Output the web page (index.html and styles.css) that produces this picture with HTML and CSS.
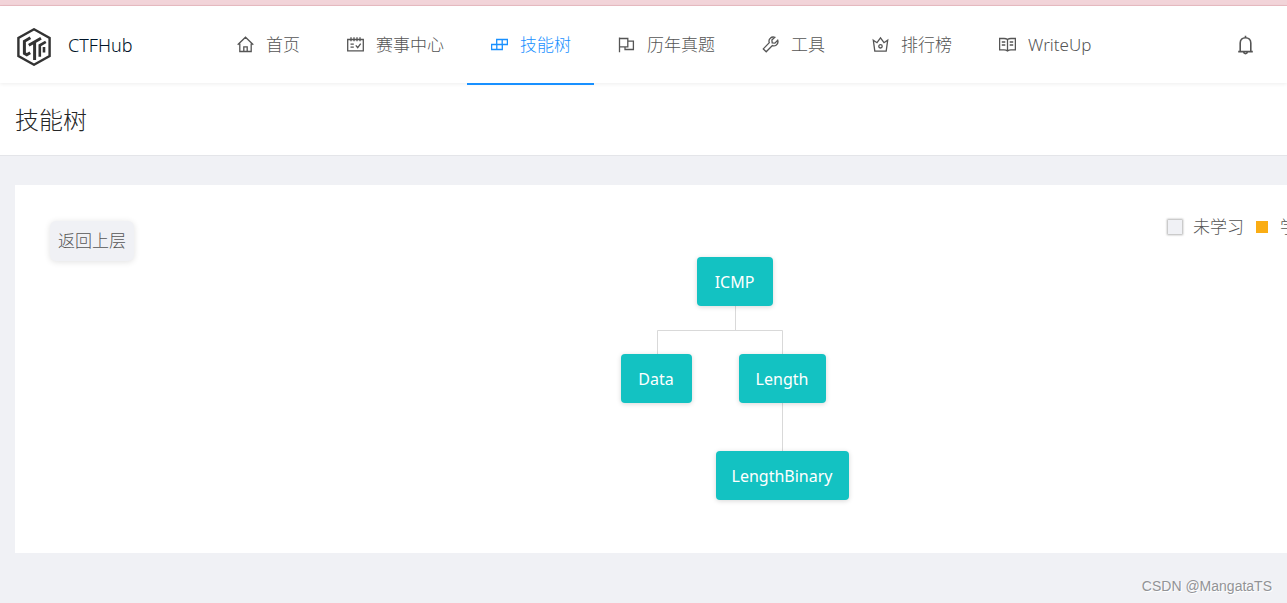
FILE: index.html
```html
<!DOCTYPE html>
<html lang="zh-CN">
<head>
<meta charset="utf-8">
<title>CTFHub 技能树</title>
<link rel="stylesheet" href="styles.css">
</head>
<body>
<div class="strip"></div>
<header class="header">
  <a class="brand" href="#">
    <svg class="logo" viewBox="0 0 34 38" fill="none" stroke="#333">
      <path d="M17 1.3 32.6 10v18L17 36.7 1.4 28V10z" stroke-width="2.4"/>
      <path d="M13.4 9.8 7.4 13.3v12l2.4 1.4 3.4-2" stroke-width="3"/>
      <path d="M11.8 17.2 24 10.2M17.6 14v18" stroke-width="3"/>
      <path d="M28.8 13.8 22.8 17.3v11.5M27 19v5.5" stroke-width="2.6"/>
    </svg>
    <span>CTFHub</span>
  </a>
  <nav class="nav">
    <a class="item" href="#"><svg class="icon" viewBox="0 0 17 17"><path d="M.7 8.8 8.5 1.2l7.8 7.6M2.8 7.5v8h11.4v-8M6.8 15.5v-4.6h3.4v4.6"/></svg>首页</a>
    <a class="item" href="#"><svg class="icon" viewBox="0 0 17 17"><path d="M.7 3.5h15.6v11.3H.7zM4 1.3v4M7 1.3v4M10 1.3v4M13 1.3v4M3.5 8.2h3.3M3.5 11.2h3.3M8.8 9.3l1.9 2.3 3-4"/></svg>赛事中心</a>
    <a class="item active" href="#"><svg class="icon" viewBox="0 0 17 17"><path d="M5.7 3.5h10.7v5H5.7zM.6 8.5h10.7v5H.6zM11.2 3.5v5M5.8 8.5v5"/></svg>技能树</a>
    <a class="item" href="#"><svg class="icon" viewBox="0 0 17 17"><path d="M1.5 1.5v14.7M1.5 2.5h8.3v8.3H1.5M9.8 5.2h5.6v8.3H7v-2.7"/></svg>历年真题</a>
    <a class="item" href="#"><svg class="icon" viewBox="0 0 17 17"><path d="M12.8 1.3 9.9 4.1l.3 2.7 2.7.3 2.8-2.9c.7 2.2-.1 4-1.6 5-1.2.8-2.6.8-3.7.4L4.2 15.8 1.3 12.9 7.3 6.7C6.7 5 7 3.3 8.3 2.2c1.3-1.2 3.1-1.4 4.5-.9z"/></svg>工具</a>
    <a class="item" href="#"><svg class="icon" viewBox="0 0 17 17"><path d="M1.3 4.2 5 6.7l3.5-4.9L12 6.7l3.7-2.5-1.5 10.9H2.8z"/><circle cx="8.5" cy="10.3" r="1.7"/></svg>排行榜</a>
    <a class="item" href="#"><svg class="icon" viewBox="0 0 17 17"><path d="M8.5 3.6C7.5 2.8 6.5 2.5 5 2.5H.6v11.3H5c1.5 0 2.5.3 3.5 1.1 1-.8 2-1.1 3.5-1.1h4.4V2.5H12c-1.5 0-2.5.3-3.5 1.1v11.3M2.8 6h3.5M2.8 9h3.5M10.7 6h3.5M10.7 9h3.5"/></svg>WriteUp</a>
  </nav>
  <button class="bell" type="button" aria-label="通知"><svg class="bell-icon" viewBox="0 0 17 20"><path d="M8.5.7v2M3.2 16.3V8c0-3.2 2.2-5.3 5.3-5.3s5.3 2.1 5.3 5.3v8.3M1.2 16.6h14.6M6.6 17.2c.4 2 3.4 2 3.8 0"/></svg></button>
</header>
<section class="heading"><h1>技能树</h1></section>
<main class="content">
  <section class="panel">
    <div class="toolbar">
      <button class="back" type="button">返回上层</button>
      <div class="legend">
        <span class="swatch todo"></span><span>未学习</span>
        <span class="swatch doing"></span><span>学</span>
      </div>
    </div>
    <div class="tree">
      <svg class="links" viewBox="0 0 228 243"><path d="M114.5 49v24M36.5 97V73.5h125V97M161.5 146v48"/></svg>
      <a class="node icmp" href="#">ICMP</a>
      <a class="node data" href="#">Data</a>
      <a class="node length" href="#">Length</a>
      <a class="node binary" href="#">LengthBinary</a>
    </div>
  </section>
</main>
<div class="watermark">CSDN @MangataTS</div>
</body>
</html>
```
FILE: styles.css
```css
* { box-sizing: border-box; }
body {
  margin: 0;
  min-height: 100vh;
  position: relative;
  overflow-x: hidden;
  background: #f0f1f5;
  color: #555;
  font-family: "Noto Sans", "Noto Sans CJK SC", sans-serif;
  font-size: 17px;
  font-weight: 300;
  line-height: 26px;
}
a { color: inherit; text-decoration: none; }
button { font: inherit; color: inherit; border: 0; padding: 0; background: none; cursor: pointer; }
.strip { height: 6px; background: #f2d4d9; border-bottom: 1px solid #e9bcc3; }
.header {
  position: relative;
  display: flex;
  height: 77px;
  padding: 0 32px 0 16px;
  background: #fff;
  box-shadow: 0 1px 4px rgba(0, 0, 0, .07);
}
.brand { display: flex; align-items: center; gap: 16px; width: 197px; color: #001529; font-size: 18px; }
.logo { width: 36px; height: 38px; margin-top: 4px; }
.nav { display: flex; flex: 1; }
.item { display: flex; align-items: center; gap: 12px; padding: 0 23px 0 24px; white-space: nowrap; height: 79px; border-bottom: 2px solid transparent; }
.active { color: #1890ff; border-color: #1890ff; }
.icon { width: 17px; height: 17px; }
.icon, .bell-icon { fill: none; stroke: currentColor; stroke-width: 1.3; }
.bell { width: 20px; }
.bell-icon { display: block; width: 17px; height: 20px; margin: 0 auto; stroke-width: 1.6; }
.heading { padding: 19px 15px 17px; background: #fff; border-bottom: 1px solid #e4e5e9; }
h1 { margin: 0; font-size: 24px; line-height: 36px; font-weight: 300; color: #262626; }
.content { padding: 29px 0 50px 15px; }
.panel { background: #fff; padding: 30px 0 53px 35px; overflow: hidden; }
.toolbar { display: flex; align-items: flex-start; height: 42px; }
.back { margin-top: 6px; height: 40px; padding: 0 8px; border-radius: 6px; background: #f0f1f5; box-shadow: 0 1px 6px rgba(0, 0, 0, .12); }
.legend { display: flex; align-items: center; width: 119px; margin-left: auto; line-height: 24px; white-space: nowrap; }
.swatch { flex: none; width: 12px; height: 12px; margin: 0 12px; background: #faad14; }
.todo { width: 14px; height: 14px; margin: 0 11px 0 0; background: #f0f1f5; box-shadow: 0 0 2px 1px rgba(0, 0, 0, .3); }
.tree { position: relative; width: 228px; height: 243px; margin: 0 auto; left: 66px; }
.links { display: block; width: 228px; height: 243px; fill: none; stroke: #d9d9d9; }
.node {
  position: absolute;
  display: flex;
  align-items: center;
  justify-content: center;
  height: 49px;
  border-radius: 4px;
  background: #13c2c2;
  color: #fff;
  font-size: 16px;
  font-weight: 400;
  box-shadow: 0 1px 5px rgba(0, 0, 0, .16);
}
.icmp { left: 76px; top: 0; width: 76px; }
.data { left: 0; top: 97px; width: 71px; }
.length { left: 118px; top: 97px; width: 87px; }
.binary { left: 95px; top: 194px; width: 133px; }
.watermark {
  position: absolute;
  right: 15px;
  bottom: 8px;
  font-family: "Liberation Sans", Arial, sans-serif;
  font-size: 14px;
  font-weight: 400;
  line-height: 18px;
  color: #929396;
  text-shadow: 1px 1px 0 #fff;
}
```
